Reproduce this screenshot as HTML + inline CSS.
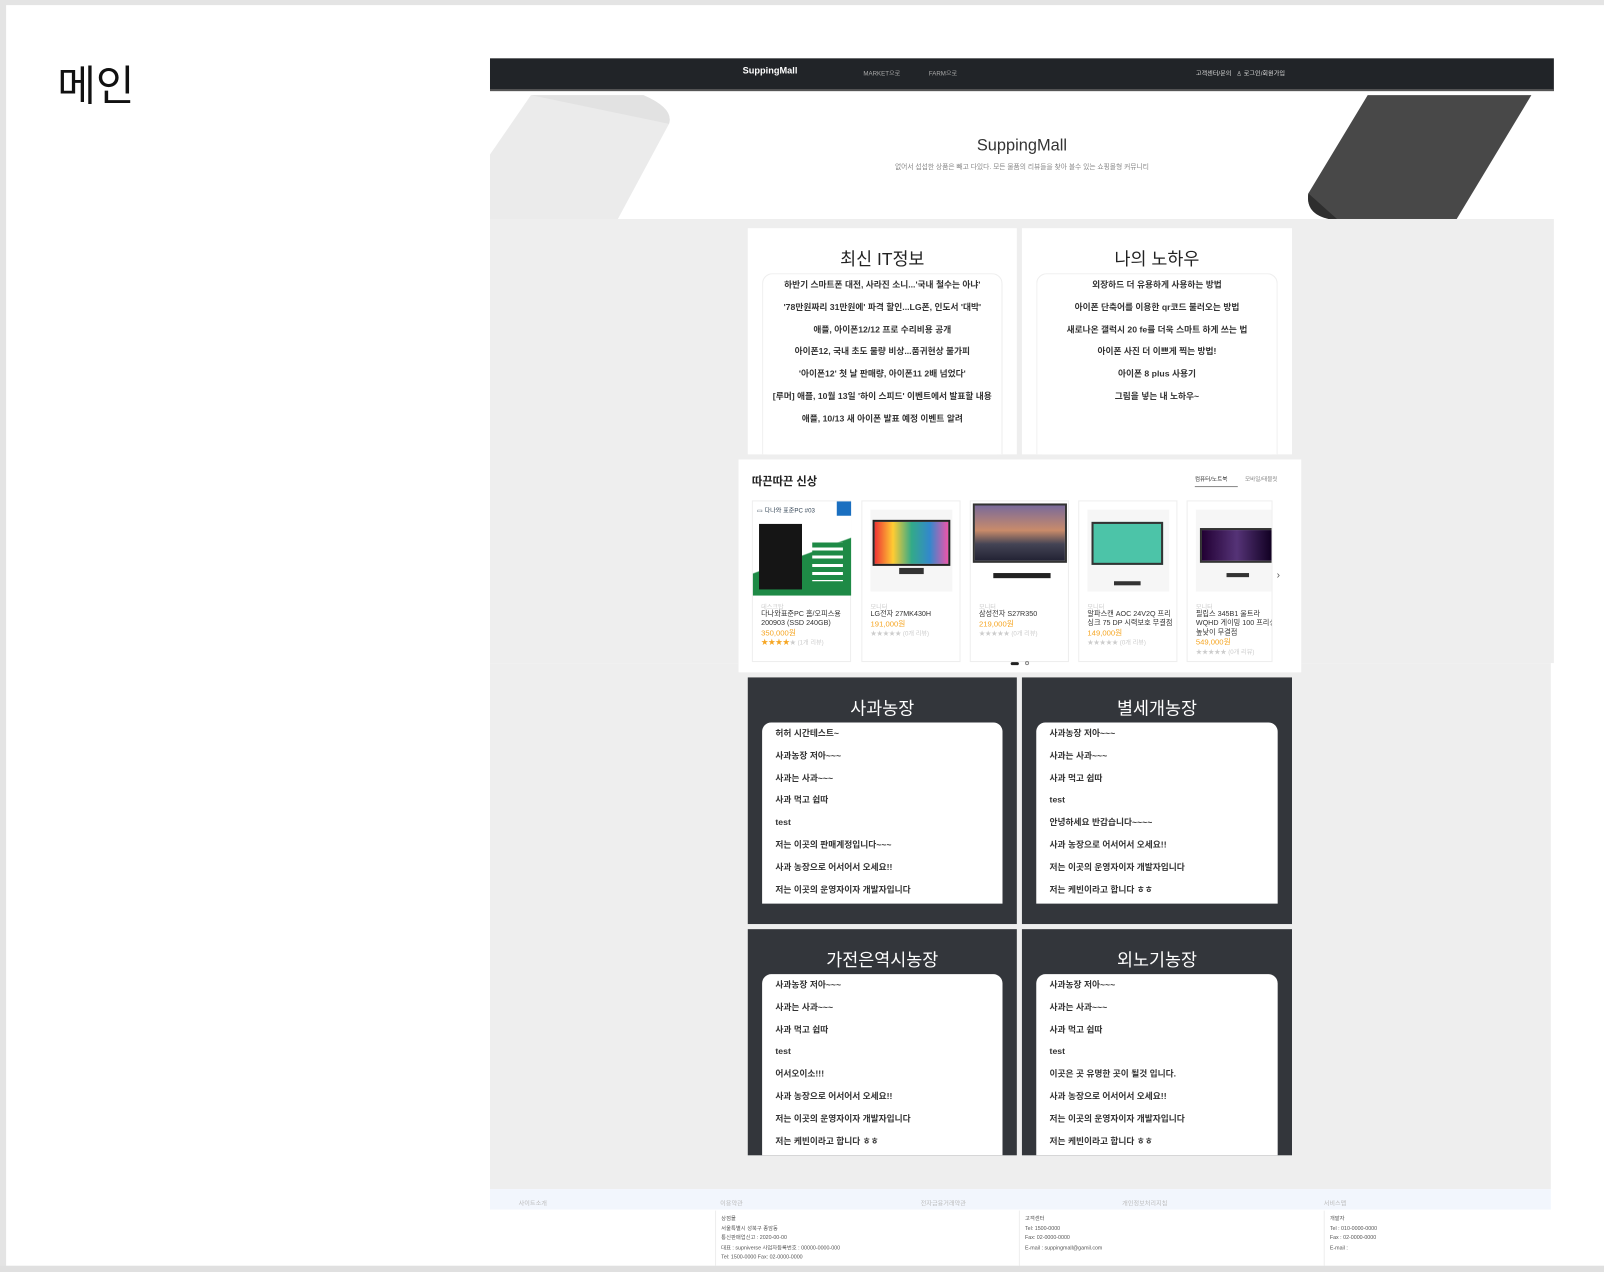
<!DOCTYPE html>
<html><head><meta charset="utf-8">
<style>
*{margin:0;padding:0;box-sizing:border-box}
html,body{width:1604px;height:1272px;overflow:hidden;background:#e4e4e4;font-family:"Liberation Sans","Noto Sans CJK KR",sans-serif}
#w{position:absolute;left:0;top:0;width:1568px;height:1243px;transform:scale(1.02296,1.0233);transform-origin:0 0}
.a{position:absolute}
.card{background:#fff}
.list{position:absolute;left:14px;right:14px;top:44px;bottom:0;border:1px solid #eee;border-bottom:none;border-radius:10px 10px 0 0;background:#fff}
.list p{font-size:8.5px;color:#333;text-align:center;height:21.8px;line-height:21.8px;font-weight:bold}
.ttl{text-align:center;font-size:17px;color:#222;margin-top:16px}
.farm{background:#33363b}
.farm .ttl{color:#fff;margin-top:16px}
.farm .list{top:44px;border:none;border-radius:9px 9px 0 0}
.farm .list p{text-align:left;padding-left:13px}
.prod{position:absolute;top:40px;width:97px;height:158px;border:1px solid #eee;background:#fff}
.prod .img{position:absolute;left:8px;top:8px;width:80px;height:80px;background:#f6f6f6}
.prod .c{position:absolute;left:8px;top:98px;font-size:6px;color:#ccc}
.prod .n{position:absolute;left:8px;top:106px;width:85px;font-size:7px;color:#333;line-height:9px}
.pr{color:#f6a623;font-size:7.5px}
.st{color:#ccc;font-size:6px}
.fh{font-size:6px;color:#bbb;position:absolute;top:9px}
.fc{position:absolute;top:1183px;font-size:5.2px;color:#555;line-height:9.5px;border-left:1px solid #eee;padding-left:5px;padding-top:4px;height:56px}
</style></head><body><div id="w">
<div class="a" style="left:6px;top:5px;width:1562px;height:1232px;background:#fff"></div>
<div class="a" style="left:56px;top:50px;font-size:41px;color:#111">메인</div>

<!-- header -->
<div class="a" style="left:479px;top:57px;width:1040px;height:32px;background:#212428;border-bottom:2px solid #555"></div>
<div class="a" style="left:726px;top:64px;font-size:9px;color:#fff;font-weight:bold">SuppingMall</div>
<div class="a" style="left:844px;top:67px;font-size:6px;color:#aaa">MARKET으로</div>
<div class="a" style="left:908px;top:67px;font-size:6px;color:#aaa">FARM으로</div>
<div class="a" style="left:1169px;top:67px;font-size:6px;color:#ddd">고객센터/문의 &nbsp; ♙ 로그인/회원가입</div>

<!-- hero -->
<div class="a" style="left:479px;top:91px;width:1040px;height:123px;background:#fff;overflow:hidden">
 <svg width="1040" height="123" style="position:absolute;left:0;top:0">
  <path d="M0 60 L40 2 L150 2 Q180 15 175 30 L125 123 L0 123Z" fill="#ebebeb"/>
  <path d="M40 2 L150 2 Q180 15 175 30 Z" fill="#e2e2e2"/>
  <path d="M858 2 L1018 2 L945 123 L820 123 Q797 118 800 98 Z" fill="#484848"/>
  <path d="M800 98 L828 123 L820 123 Q797 118 800 98Z" fill="#2e2e2e"/>
 </svg>
 <div class="a" style="left:0;width:1040px;top:43px;text-align:center;font-size:16px;color:#333">SuppingMall</div>
 <div class="a" style="left:0;width:1040px;top:66px;text-align:center;font-size:6.6px;color:#888">없어서 섭섭한 상품은 빼고 다있다. 모든 물품의 리뷰들을 찾아 볼수 있는 쇼핑몰형 커뮤니티</div>
</div>

<!-- gray body -->
<div class="a" style="left:479px;top:214px;width:1040px;height:434px;background:#eee"></div>
<div class="a" style="left:479px;top:648px;width:1037px;height:514px;background:#eee"></div>

<div class="a card" style="left:731px;top:223px;width:263px;height:221px">
 <div class="ttl">최신 IT정보</div>
 <div class="list"><p>하반기 스마트폰 대전, 사라진 소니...'국내 철수는 아냐'</p><p>'78만원짜리 31만원에' 파격 할인...LG폰, 인도서 '대박'</p><p>애플, 아이폰12/12 프로 수리비용 공개</p><p>아이폰12, 국내 초도 물량 비상...품귀현상 불가피</p><p>'아이폰12' 첫 날 판매량, 아이폰11 2배 넘었다'</p><p>[루머] 애플, 10월 13일 '하이 스피드' 이벤트에서 발표할 내용</p><p>애플, 10/13 새 아이폰 발표 예정 이벤트 알려</p></div>
</div>
<div class="a card" style="left:999px;top:223px;width:264px;height:221px">
 <div class="ttl">나의 노하우</div>
 <div class="list"><p>외장하드 더 유용하게 사용하는 방법</p><p>아이폰 단축어를 이용한 qr코드 불러오는 방법</p><p>새로나온 갤럭시 20 fe를 더욱 스마트 하게 쓰는 법</p><p>아이폰 사진 더 이쁘게 찍는 방법!</p><p>아이폰 8 plus 사용기</p><p>그림을 넣는 내 노하우~</p></div>
</div>

<!-- products -->
<div class="a card" style="left:722px;top:449px;width:550px;height:208px">
 <div class="a" style="left:13px;top:13px;font-size:11px;font-weight:bold;color:#222">따끈따끈 신상</div>
 <div class="a" style="left:446px;top:15px;font-size:5.5px;color:#333;border-bottom:1.5px solid #888;padding-bottom:3px;width:42px">컴퓨터/노트북</div>
 <div class="a" style="left:495px;top:15px;font-size:5.5px;color:#888">모바일/태블릿</div>
 <div class="prod" style="left:13px"><div class="img" style="left:0;top:0;width:96px;height:92px;background:linear-gradient(160deg,#fff 55%,#1e8a46 56%)"><div class="a" style="left:4px;top:4px;font-size:6px;color:#345">▭ 다나와 표준PC #03</div><div class="a" style="left:82px;top:0;width:14px;height:14px;background:#1a6fc0"></div><div class="a" style="left:6px;top:22px;width:42px;height:64px;background:#151515"></div><div class="a" style="left:58px;top:40px;width:30px;height:38px;background:repeating-linear-gradient(#1e8a46 0 5px,#fff 5px 8px)"></div></div><div class="c">데스크탑</div><div class="n">다나와표준PC 홈/오피스용 200903 (SSD 240GB)<br><span class="pr">350,000원</span><br><span style="color:#f6a623">★★★★</span><span class="st">★ (1개 리뷰)</span></div></div>
 <div class="prod" style="left:120px"><div class="img"><div class="a" style="left:2px;top:10px;width:76px;height:45px;background:linear-gradient(90deg,#e33,#fc3,#3a8,#38c,#e5a);border:2px solid #222"></div><div class="a" style="left:28px;top:57px;width:24px;height:6px;background:#333"></div></div><div class="c">모니터</div><div class="n">LG전자 27MK430H<br><span class="pr">191,000원</span><br><span class="st">★★★★★ (0개 리뷰)</span></div></div>
 <div class="prod" style="left:226px"><div class="img" style="left:2px;top:2px;width:92px;height:88px;background:#fff"><div class="a" style="left:0;top:0;width:92px;height:58px;background:linear-gradient(#7a6a9a,#c98b6a 45%,#445 70%,#223);border:2px solid #333"></div><div class="a" style="left:20px;top:68px;width:56px;height:5px;background:#222"></div></div><div class="c">모니터</div><div class="n">삼성전자 S27R350<br><span class="pr">219,000원</span><br><span class="st">★★★★★ (0개 리뷰)</span></div></div>
 <div class="prod" style="left:332px"><div class="img"><div class="a" style="left:4px;top:12px;width:70px;height:42px;background:#4cc4a8;border:2px solid #333"></div><div class="a" style="left:26px;top:70px;width:26px;height:4px;background:#333"></div></div><div class="c">모니터</div><div class="n">알파스캔 AOC 24V2Q 프리싱크 75 DP 시력보호 무결점<br><span class="pr">149,000원</span><br><span class="st">★★★★★ (0개 리뷰)</span></div></div>
 <div class="prod" style="left:438px;width:84px;overflow:hidden"><div class="img"><div class="a" style="left:4px;top:18px;width:72px;height:34px;background:linear-gradient(90deg,#203,#537,#102);border:2px solid #333"></div><div class="a" style="left:30px;top:62px;width:22px;height:4px;background:#333"></div></div><div class="c">모니터</div><div class="n">필립스 345B1 울트라 WQHD 게이밍 100 프리싱크 높낮이 무결점<br><span class="pr">549,000원</span><br><span class="st">★★★★★ (0개 리뷰)</span></div></div>
 <div class="a" style="left:526px;top:108px;font-size:10px;color:#555">›</div>
 <div class="a" style="left:266px;top:198px;width:8px;height:3px;border-radius:2px;background:#222"></div>
 <div class="a" style="left:280px;top:197px;width:4px;height:4px;border-radius:50%;border:1px solid #888"></div>
</div>

<!-- farms -->
<div class="a farm" style="left:731px;top:662px;width:263px;height:241px"><div class="ttl">사과농장</div><div class="list" style="bottom:20px"><p>허허 시간테스트~</p><p>사과농장 저아~~~</p><p>사과는 사과~~~</p><p>사과 먹고 쉽따</p><p>test</p><p>저는 이곳의 판매계정입니다~~~</p><p>사과 농장으로 어서어서 오세요!!</p><p>저는 이곳의 운영자이자 개발자입니다</p></div></div>
<div class="a farm" style="left:999px;top:662px;width:264px;height:241px"><div class="ttl">별세개농장</div><div class="list" style="bottom:20px"><p>사과농장 저아~~~</p><p>사과는 사과~~~</p><p>사과 먹고 쉽따</p><p>test</p><p>안녕하세요 반갑습니다~~~~</p><p>사과 농장으로 어서어서 오세요!!</p><p>저는 이곳의 운영자이자 개발자입니다</p><p>저는 케빈이라고 합니다 ㅎㅎ</p></div></div>
<div class="a farm" style="left:731px;top:908px;width:263px;height:221px"><div class="ttl">가전은역시농장</div><div class="list"><p>사과농장 저아~~~</p><p>사과는 사과~~~</p><p>사과 먹고 쉽따</p><p>test</p><p>어서오이소!!!</p><p>사과 농장으로 어서어서 오세요!!</p><p>저는 이곳의 운영자이자 개발자입니다</p><p>저는 케빈이라고 합니다 ㅎㅎ</p></div></div>
<div class="a farm" style="left:999px;top:908px;width:264px;height:221px"><div class="ttl">외노기농장</div><div class="list"><p>사과농장 저아~~~</p><p>사과는 사과~~~</p><p>사과 먹고 쉽따</p><p>test</p><p>이곳은 곳 유명한 곳이 될것 입니다.</p><p>사과 농장으로 어서어서 오세요!!</p><p>저는 이곳의 운영자이자 개발자입니다</p><p>저는 케빈이라고 합니다 ㅎㅎ</p></div></div>

<!-- footer -->
<div class="a" style="left:479px;top:1162px;width:1037px;height:20px;background:#f2f6fd">
 <div class="fh" style="left:28px">사이트소개</div><div class="fh" style="left:225px">이용약관</div><div class="fh" style="left:421px">전자금융거래약관</div><div class="fh" style="left:618px">개인정보처리지침</div><div class="fh" style="left:815px">서비스맵</div>
</div>
<div class="fc" style="left:699px">상점몰<br>서울특별시 성북구 종암동<br>통신판매업신고 : 2020-00-00<br>대표 : supniverse 사업자등록번호 : 00000-0000-000<br>Tel: 1500-0000 Fax: 02-0000-0000</div>
<div class="fc" style="left:996px">고객센터<br>Tel: 1500-0000<br>Fax: 02-0000-0000<br>E-mail : suppingmall@gamil.com</div>
<div class="fc" style="left:1294px">개발자<br>Tel : 010-0000-0000<br>Fax : 02-0000-0000<br>E-mail :</div>
<div class="a" style="left:0;top:1237px;width:1568px;height:6px;background:#e0e0e0"></div>
</div></body></html>
